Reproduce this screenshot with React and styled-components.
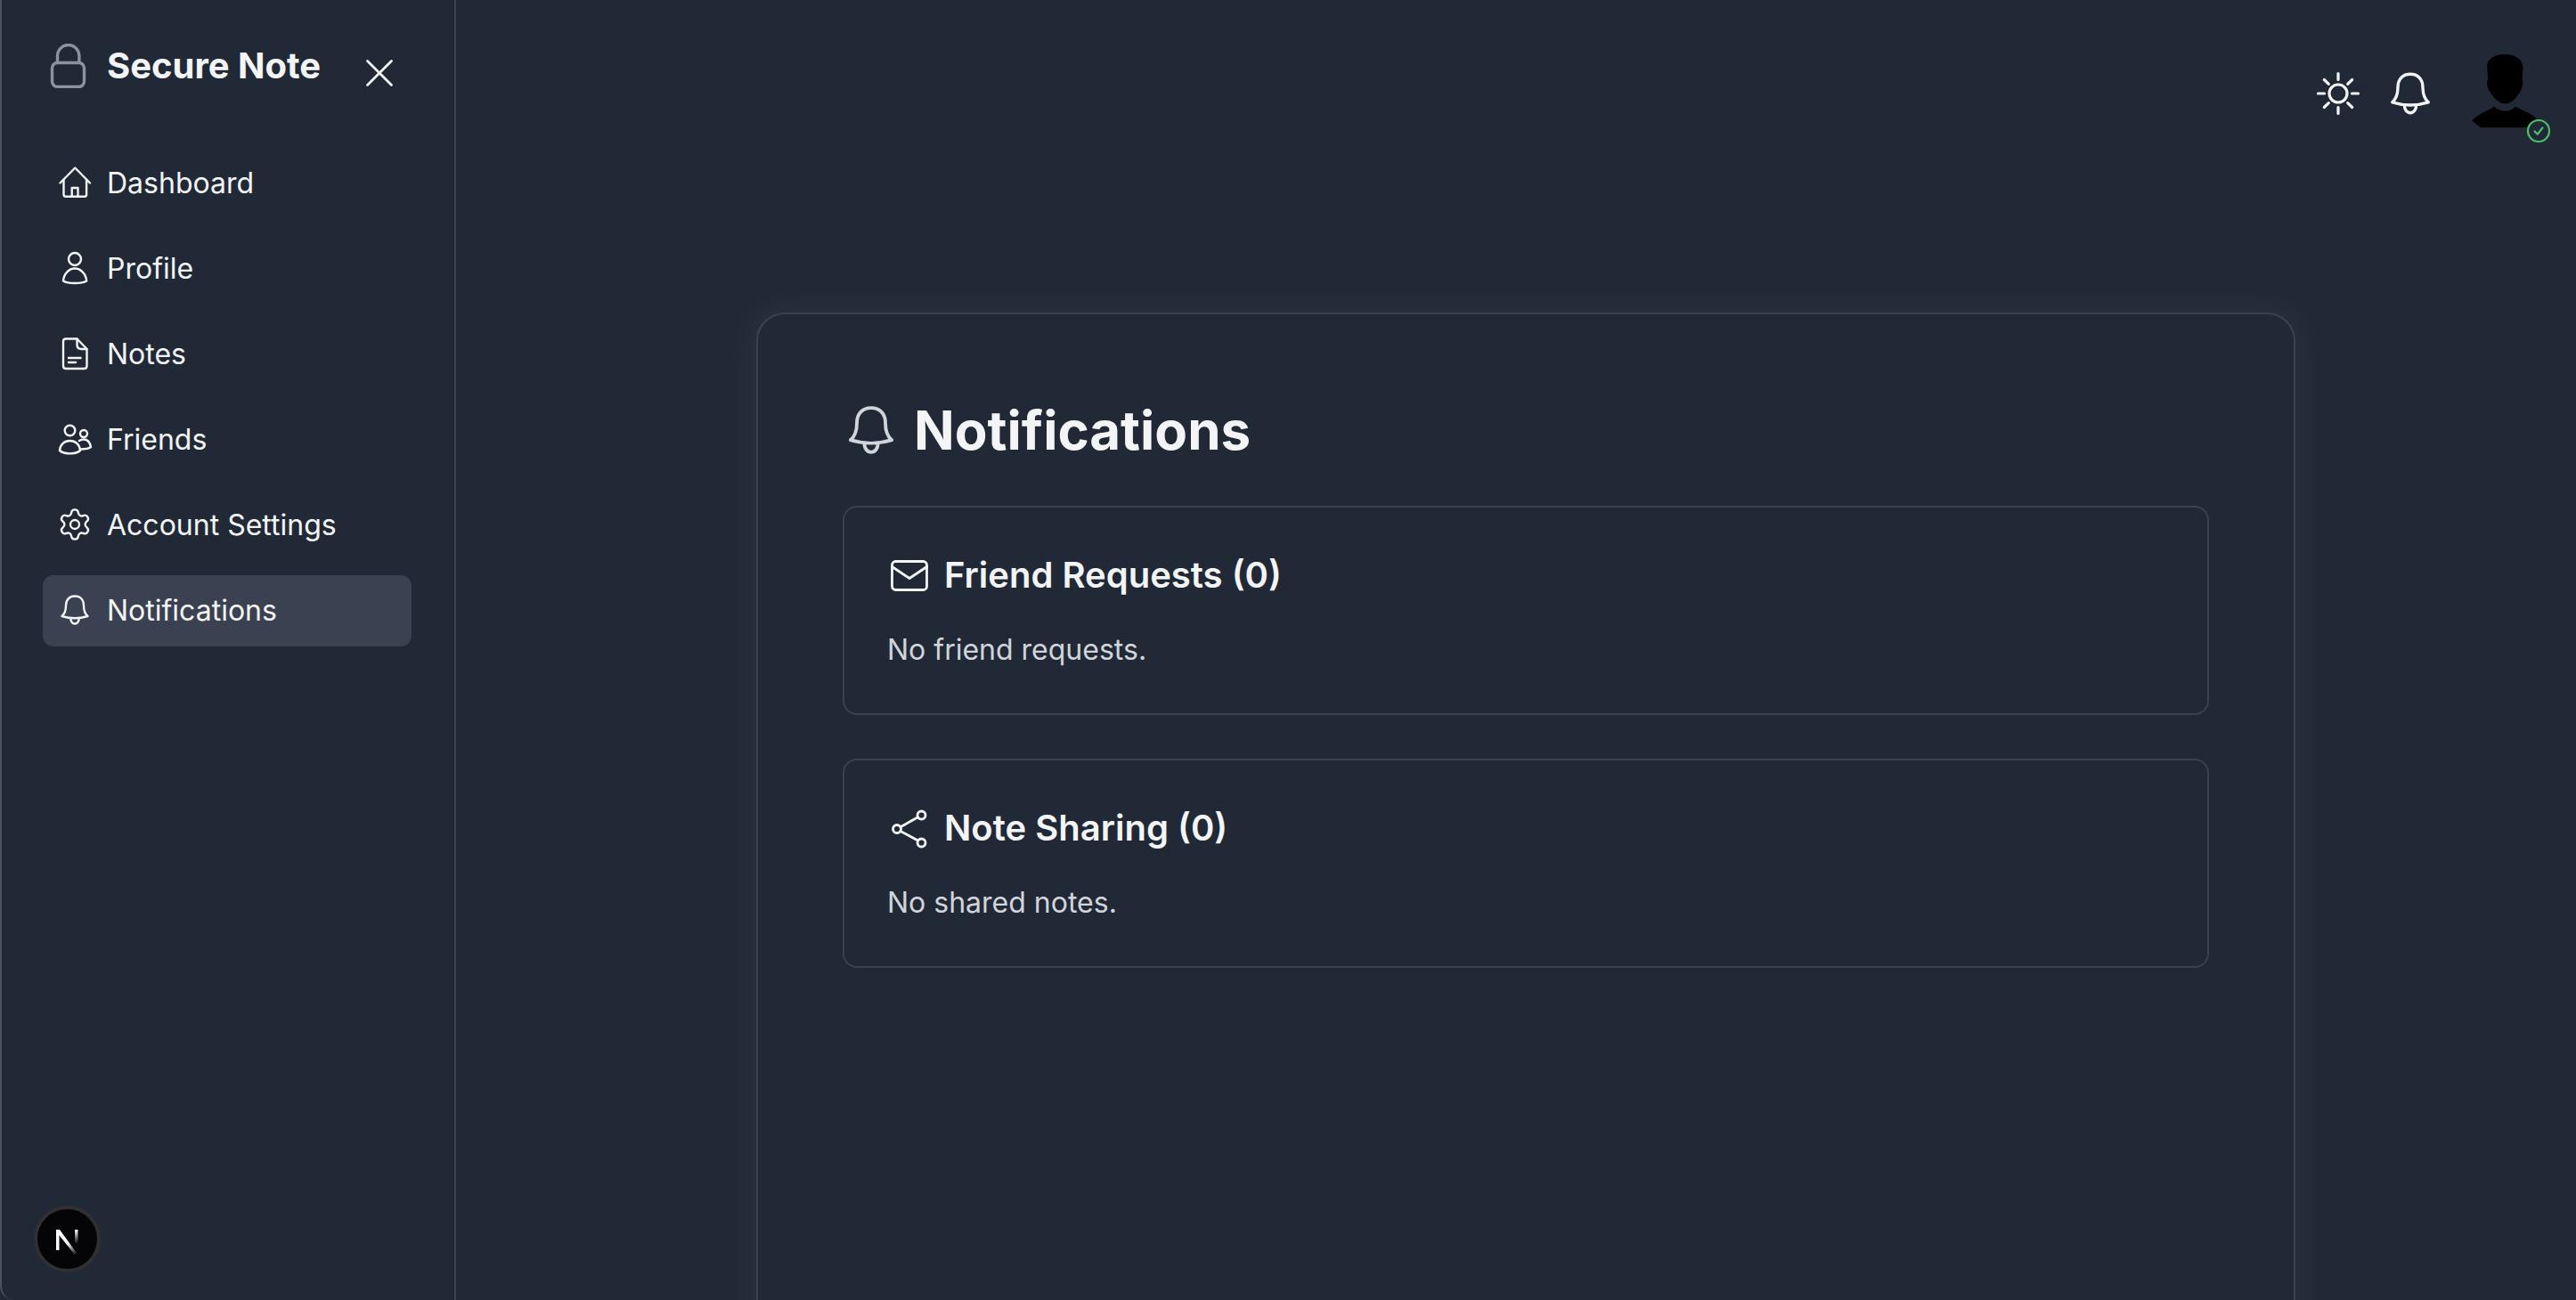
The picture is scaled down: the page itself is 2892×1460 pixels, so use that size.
import React from "react";
import styled, { createGlobalStyle } from "styled-components";

const Global = createGlobalStyle`
  html, body { margin: 0; padding: 0; background: #1b2230; }
  body { font-family: Inter, "Noto Sans", sans-serif; color: #f3f4f6; }
  * { box-sizing: border-box; }
`;

const Shell = styled.div`
  position: relative;
  display: flex;
  width: 2892px;
  height: 1460px;
  overflow: hidden;
  background: #212936;
`;

const Sidebar = styled.aside`
  flex: 0 0 512px;
  height: 100%;
  padding: 49px 48px 0 48px;
  background: #212936;
  border-left: 2px solid #4b5261;
  border-right: 2px solid #3a4150;
  border-bottom-left-radius: 16px;
`;

const Brand = styled.div`
  display: flex;
  align-items: flex-start;
  height: 61px;
  padding-left: 2px;
`;

const BrandName = styled.h2`
  margin: 0 0 0 18px;
  font-size: 40px;
  line-height: 50px;
  font-weight: 700;
  color: #f3f4f6;
  white-space: nowrap;
`;

const CloseButton = styled.div`
  width: 56px;
  height: 56px;
  margin: 5px 0 0 38px;
  flex: none;
`;

const Nav = styled.nav`
  display: flex;
  flex-direction: column;
  gap: 16px;
  margin: 56px -2px 0 -2px;
`;

const NavItem = styled.div`
  display: flex;
  align-items: center;
  gap: 16px;
  width: 414px;
  height: 80px;
  padding: 0 16px 2px;
  border-radius: 12px;
  font-size: 32px;
  font-weight: 415;
  color: #f3f4f6;
  background: ${(p) => (p.$active ? "#3a4150" : "transparent")};
`;

const Main = styled.main`
  flex: 1;
  min-width: 0;
  display: flex;
  flex-direction: column;
`;

const Topbar = styled.header`
  flex: none;
  height: 210px;
  display: flex;
  align-items: center;
  justify-content: flex-end;
  padding-right: 45px;
`;

const TopIcon = styled.div`
  width: 56px;
  height: 56px;
  flex: none;
  margin-right: ${(p) => p.$gap}px;
`;

const Avatar = styled.div`
  position: relative;
  width: 72px;
  height: 88px;
  flex: none;
`;

const Badge = styled.div`
  position: absolute;
  right: -17px;
  top: 72px;
  width: 28px;
  height: 28px;
`;

const Content = styled.div`
  flex: 1;
  display: flex;
  justify-content: center;
  padding: 141px 0 0 22px;
`;

const Card = styled.section`
  width: 1728px;
  height: 1400px;
  flex: none;
  padding: 94px 95px;
  background: #212936;
  border: 2px solid #3a4150;
  border-radius: 32px;
  box-shadow: 0 0 36px 10px rgba(255, 255, 255, 0.04);
`;

const Title = styled.h1`
  display: flex;
  align-items: center;
  gap: 16px;
  margin: 0 0 49px;
  font-size: 60px;
  line-height: 72px;
  font-weight: 700;
  color: #f3f4f6;
`;

const Panel = styled.div`
  height: 235px;
  margin-bottom: 49px;
  padding: 48px;
  border: 2px solid #3a4150;
  border-radius: 16px;
`;

const PanelTitle = styled.h2`
  display: flex;
  align-items: center;
  gap: 16px;
  height: 56px;
  margin: 0 0 32px;
  font-size: 40px;
  line-height: 56px;
  font-weight: 600;
  color: #f3f4f6;
`;

const PanelText = styled.p`
  margin: 0;
  font-size: 32px;
  line-height: 48px;
  font-weight: 415;
  color: #d1d5db;
`;

const DevBadge = styled.div`
  position: absolute;
  left: 38px;
  top: 1354px;
  width: 75px;
  height: 75px;
  border-radius: 50%;
  background: #050508;
  border: 4px solid #303033;
`;

const Glyph = styled.svg`
  display: block;
  flex: none;
  fill: none;
  stroke: ${(p) => p.$color || "currentColor"};
  stroke-width: ${(p) => p.$stroke || 2.4};
  stroke-linecap: round;
  stroke-linejoin: round;
  color: #f3f4f6;
`;

const Icon = ({ size = 40, view = "0 0 40 40", color, stroke, children }) => (
  <Glyph width={size} height={size} viewBox={view} $color={color} $stroke={stroke}>
    {children}
  </Glyph>
);

const HomeIcon = () => (
  <Icon>
    <path d="M3.500 20.500 20.300 3.500 37 20.500" />
    <path d="M7.500 17v16.500c0 1.400.8 2.200 2.200 2.200h21.200c1.400 0 2.200-.8 2.200-2.200V17" />
    <path d="M16.700 35.500V26h6.800v9.500" />
  </Icon>
);
const UserIcon = () => (
  <Icon>
    <circle cx="20" cy="10" r="7" />
    <path d="M7 34.500C7.500 26 14 20.500 20 20.500S32.500 26 33.200 34.500C28 37.800 12 37.800 7 34.500Z" />
  </Icon>
);
const FileIcon = () => (
  <Icon>
    <path d="M22.500 3.500H10c-2 0-3 1-3 3v27.500c0 2 1 3 3 3h20.500c2 0 3-1 3-3V15z" />
    <path d="M22.500 3.500v6.500c0 3 2 5 5 5h6" />
    <path d="M13 25h13.500M13 30h8" />
  </Icon>
);
const FriendsIcon = () => (
  <Icon>
    <circle cx="14.500" cy="10.500" r="5.800" />
    <circle cx="30" cy="14" r="4" />
    <path d="M3 33c.5-7 5.500-11 11.500-11s11 4 11.500 11c-5 4.500-18 4.500-23 0Z" />
    <path d="M25 22c1.500-1 3.500-1.500 5-1.500 4.500 0 7 3.500 8 8.500-2.500 2-6.500 2.500-11 2.500" />
  </Icon>
);
const GearIcon = () => (
  <Icon size={40} view="0 0 24 24" stroke={1.4}>
    <path d="M9.671 4.136a2.34 2.34 0 0 1 4.659 0 2.34 2.34 0 0 0 3.319 1.915 2.34 2.34 0 0 1 2.33 4.033 2.34 2.34 0 0 0 0 3.831 2.34 2.34 0 0 1-2.33 4.033 2.34 2.34 0 0 0-3.319 1.915 2.34 2.34 0 0 1-4.659 0 2.34 2.34 0 0 0-3.32-1.915 2.34 2.34 0 0 1-2.33-4.033 2.34 2.34 0 0 0 0-3.831A2.34 2.34 0 0 1 6.350 6.051a2.34 2.34 0 0 0 3.319-1.915" />
    <circle cx="12" cy="12" r="3" />
  </Icon>
);
const BellIcon = ({ size = 40, color }) => (
  <Icon size={size} color={color}>
    <path d="M5.500 27c3-2.500 4.500-6.500 4.500-12 0-6.500 4-10.500 10-10.500S30 8.500 30 15c0 5.500 1.500 9.500 4.500 12-9 2.800-20 2.800-29 0Z" />
    <path d="M15.300 29c-.2 4 2 6.500 4.700 6.500s4.900-2.500 4.700-6.500" />
  </Icon>
);
const SunIcon = () => (
  <Icon size={56} view="0 0 56 56" stroke={3.2}>
    <circle cx="28" cy="28" r="10" />
    <path d="M28 5.500v7M28 43.500v7M5.500 28h7M43.500 28h7M12.300 12.500l5 4.800M43.700 12.500l-5 4.800M12.300 43.500l5-4.800M43.700 43.500l-5-4.800" />
  </Icon>
);
const MailIcon = () => (
  <Icon size={48} view="0 0 48 48" stroke={2.8}>
    <rect x="5.500" y="8.500" width="39" height="32" rx="4" />
    <path d="M5.500 14.500 25 27.500l19.500-13" />
  </Icon>
);
const ShareIcon = () => (
  <Icon size={48} view="0 0 48 48" stroke={2.8}>
    <circle cx="38.500" cy="9.500" r="4.500" />
    <circle cx="11" cy="25" r="4.500" />
    <circle cx="38.500" cy="40.500" r="4.500" />
    <path d="M15 22.800 34.500 11.800M15 27.500 34.500 38" />
  </Icon>
);

const NAV = [
  ["Dashboard", HomeIcon],
  ["Profile", UserIcon],
  ["Notes", FileIcon],
  ["Friends", FriendsIcon],
  ["Account Settings", GearIcon],
  ["Notifications", BellIcon],
];

export default function App() {
  return (
    <Shell>
      <Global />
      <Sidebar>
        <Brand>
          <Icon size={50} view="0 0 50 50" color="#8b93a1" stroke={3.4}>
            <rect x="6.500" y="21.500" width="36" height="27" rx="6" />
            <path d="M12.500 21v-7a12.200 12.500 0 0 1 24.400 0v7" />
          </Icon>
          <BrandName>Secure Note</BrandName>
          <CloseButton>
            <Icon size={56} view="0 0 56 56" stroke={2.8}>
              <path d="M14.500 14.500 41.500 41.500M41.500 14.500 14.500 41.500" />
            </Icon>
          </CloseButton>
        </Brand>
        <Nav>
          {NAV.map(([label, Item]) => (
            <NavItem key={label} $active={label === "Notifications"}>
              <Item />
              {label}
            </NavItem>
          ))}
        </Nav>
      </Sidebar>
      <Main>
        <Topbar>
          <TopIcon $gap={25}>
            <SunIcon />
          </TopIcon>
          <TopIcon $gap={41}>
            <BellIcon size={56} />
          </TopIcon>
          <Avatar>
            <svg width="74" height="84" viewBox="645 90 220 250" fill="#000">
              <path d="M696 130C696 105 722 90 755 90 792 90 816 108 816 135L813 175C818 180 815 195 811 205 802 225 782 255 756 255 730 255 710 225 700 205 695 195 694 180 699 175Z" />
              <path d="M645 312C665 290 695 280 720 265 730 275 745 280 756 280 770 280 782 275 790 265 815 278 845 288 862 305L830 335H675Z" />
            </svg>
            <Badge>
              <Icon size={28} view="0 0 28 28" color="#4fbf67" stroke={2.2}>
                <circle cx="14" cy="14" r="12" />
                <path d="M9.500 14.500 12.800 17.800 18.500 10.500" />
              </Icon>
            </Badge>
          </Avatar>
        </Topbar>
        <Content>
          <Card>
            <Title>
              <BellIcon size={64} color="#d1d5db" />
              Notifications
            </Title>
            <Panel>
              <PanelTitle>
                <MailIcon />
                Friend Requests (0)
              </PanelTitle>
              <PanelText>No friend requests.</PanelText>
            </Panel>
            <Panel>
              <PanelTitle>
                <ShareIcon />
                Note Sharing (0)
              </PanelTitle>
              <PanelText>No shared notes.</PanelText>
            </Panel>
          </Card>
        </Content>
      </Main>
      <DevBadge>
        <svg width="67" height="67" viewBox="0 0 67 67" fill="none">
          <defs>
            <linearGradient id="nDiag" x1="0" y1="0" x2="1" y2="1">
              <stop offset="0.55" stopColor="#fff" />
              <stop offset="1" stopColor="#fff" stopOpacity="0" />
            </linearGradient>
            <linearGradient id="nBar" x1="0" y1="0" x2="0" y2="1">
              <stop offset="0" stopColor="#fff" />
              <stop offset="1" stopColor="#fff" stopOpacity="0" />
            </linearGradient>
          </defs>
          <rect x="21" y="23" width="3.500" height="23" fill="#fff" />
          <path d="M21 23h4L45 50.500h-3.500L21 25Z" fill="url(#nDiag)" />
          <rect x="42" y="23" width="3.500" height="16" fill="url(#nBar)" />
        </svg>
      </DevBadge>
    </Shell>
  );
}
